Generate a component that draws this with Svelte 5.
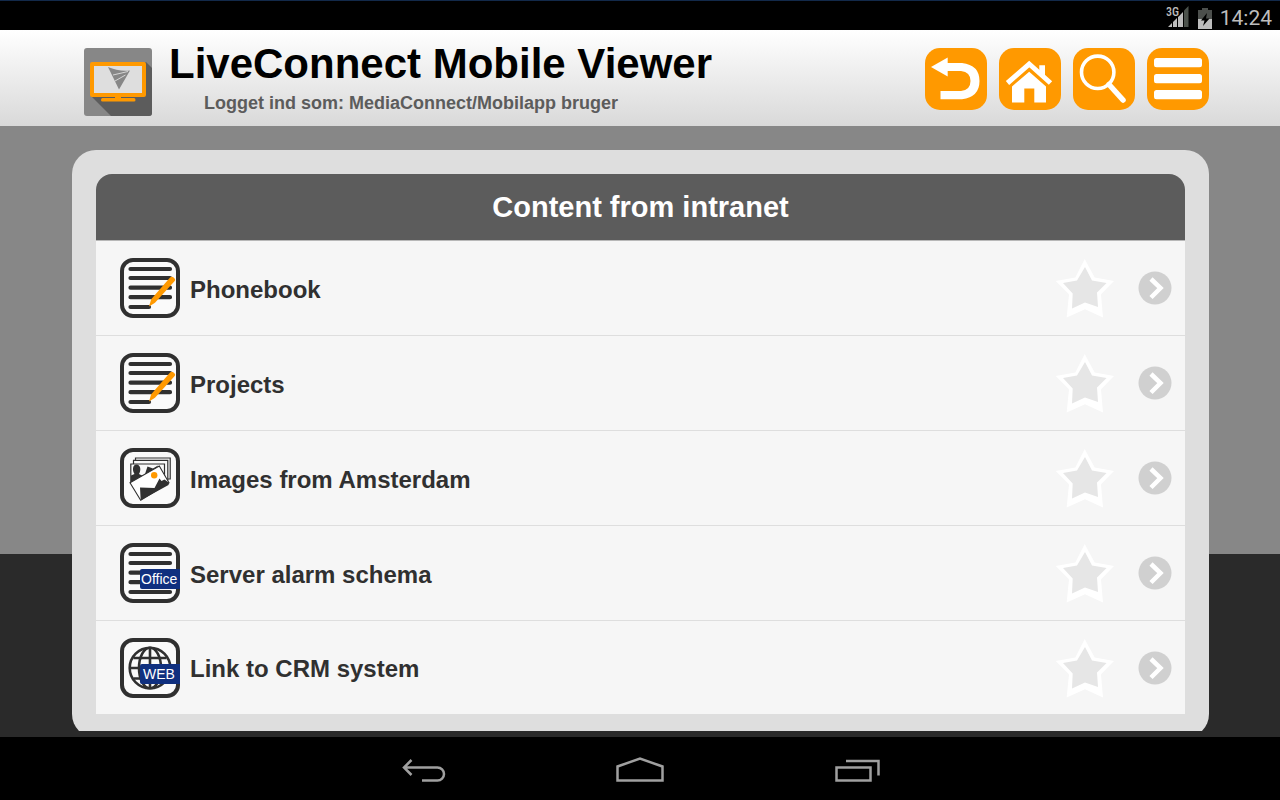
<script>
  const items = [
    { title: 'Phonebook', icon: 'edit' },
    { title: 'Projects', icon: 'edit' },
    { title: 'Images from Amsterdam', icon: 'images' },
    { title: 'Server alarm schema', icon: 'office' },
    { title: 'Link to CRM system', icon: 'web' }
  ];
</script>

{#snippet rowIcon(kind)}
  <svg class="row-icon" viewBox="0 0 60 60" aria-hidden="true">
    <rect x="2" y="2" width="56" height="56" rx="11" fill="#fafafa" stroke="#303030" stroke-width="4" />
    {#if kind === 'edit' || kind === 'office'}
      <g stroke="#303030" stroke-width="4.2" stroke-linecap="round">
        <path d="M10.5 11H50M10.5 20H50M10.5 29.7H50M10.5 39.2H50" />
        {#if kind === 'edit'}
          <path d="M10.5 49H29" />
        {:else}
          <path d="M10.5 49H50" />
        {/if}
      </g>
    {/if}
    {#if kind === 'edit'}
      <path d="M29 48.5L31.2 41.3L50.3 19.2Q52 18 53.6 19.5Q56 21.3 54.7 23L35 44.7Z" fill="#ff9900" />
    {/if}
    {#if kind === 'images'}
      <g stroke="#303030" stroke-width="1.2" fill="#fafafa">
        <path d="M15.500 10H50.200V31H15.500Z" />
        <path d="M13.500 12.300H47.800V32H13.500Z" />
        <path d="M10.800 16H44.500V34H10.800Z" />
      </g>
      <path d="M11 34.500V27.500L14.500 26C12 22.500 12.500 16.500 16.500 16.500C20.500 16.500 21.500 22 19 26L23 28V32Z" fill="#303030" />
      <path d="M25 26L27.500 18.500L33 20.500L38 17.500L35 25Z" fill="#303030" />
      <path d="M10 34.700L39.300 17.900L49 34.700L20.700 52.300Z" fill="#fff" stroke="#303030" stroke-width="1.1" />
      <path d="M20.700 52.300L20 39.500L34.500 40L39.500 30.500L41.500 33L44.500 31.500L49 34.700L48.500 37Z" fill="#303030" />
      <circle cx="34.200" cy="27.200" r="3.200" fill="#ff9900" />
    {/if}
    {#if kind === 'web'}
      <g fill="none" stroke="#303030" stroke-width="2.6">
        <circle cx="30" cy="30" r="20.3" />
        <ellipse cx="30" cy="30" rx="11" ry="20.3" />
        <path d="M30 10V50M10 30H50M13.5 20H46.5M13.5 40.5H46.5" />
      </g>
    {/if}
    {#if kind === 'office' || kind === 'web'}
      <path d="M22 26H60V46H22Q20 46 20 44V28Q20 26 22 26Z" fill="#10307f" />
      <text x={kind === 'office' ? 21 : 23} y="41" class="tag">{kind === 'office' ? 'Office' : 'WEB'}</text>
    {/if}
  </svg>
{/snippet}

<div class="screen">
  <div class="status">
    <svg class="signal" viewBox="0 0 24 24" aria-label="3G signal">
      <path d="M22.5 0V21H18V4.5Z" fill="#4c524c" />
      <path d="M2 21L6 17V21ZM7 21V16L11 12V21ZM12 21V11L17 6V21Z" fill="#bdbdbd" />
      <text x="0" y="10" class="net">3G</text>
    </svg>
    <svg class="battery" viewBox="0 0 14 21" aria-label="Battery charging">
      <path d="M4 0H10V2H14V12H0V2H4Z" fill="#4c4f4c" />
      <path d="M0 11H14V21H0Z" fill="#bdbdbd" />
      <path d="M9 5L3 12.5H6.5L5 18L11.5 10.5H8Z" fill="#000" />
    </svg>
    <span class="clock">14:24</span>
  </div>

  <header>
    <svg class="logo" viewBox="0 0 68 68" aria-hidden="true">
      <rect width="68" height="68" rx="3" fill="#878787" />
      <path d="M62 14L68 20V65Q68 68 65 68H27L7 48Z" fill="#5c5c5c" />
      <rect x="8" y="16" width="52" height="31" fill="#dedede" stroke="#ff9900" stroke-width="4" stroke-linejoin="round" />
      <path d="M31 48H37V50H50Q51.5 50 51.5 52Q51.5 53.5 50 53.5H18.5Q17 53.5 17 52Q17 50 18.5 50H31Z" fill="#ff9900" />
      <path d="M24 19Q34 23.5 46 22.5L35 41.5Z" fill="#878787" />
      <path d="M29 27L44 23.500M31 33L41.500 27" stroke="#dedede" stroke-width="0.9" />
    </svg>
    <div class="heading">
      <h1>LiveConnect Mobile Viewer</h1>
      <p>Logget ind som: MediaConnect/Mobilapp bruger</p>
    </div>
    <nav class="tools" aria-label="Tools">
      <button aria-label="Back">
        <svg viewBox="0 0 62 62">
          <path d="M6 19L22.700 9.500V28.500Z" fill="#fff" />
          <path d="M22 15H37Q54.500 17 54.500 33Q54.500 49 37 51.200H15.500V43H36Q45.500 42 45.500 33Q45.500 24 36 23H22Z" fill="#fff" />
        </svg>
      </button>
      <button aria-label="Home">
        <svg viewBox="0 0 62 62">
          <path d="M8.500 35L30.200 16L51.500 35" fill="none" stroke="#fff" stroke-width="5" />
          <path d="M40.300 17.200H46V30L40.300 25Z" fill="#fff" />
          <path d="M30.200 23.700L47 38.500V54.500H35.300V40.500H25.300V54.500H13V38.500Z" fill="#fff" />
        </svg>
      </button>
      <button aria-label="Search">
        <svg viewBox="0 0 62 62" fill="none" stroke="#fff">
          <circle cx="24.700" cy="24.300" r="16.200" stroke-width="3.600" />
          <path d="M36 36.500L50 52" stroke-width="5.500" stroke-linecap="round" />
        </svg>
      </button>
      <button aria-label="Menu">
        <svg viewBox="0 0 62 62" fill="#fff">
          <rect x="7" y="10" width="48" height="9.300" rx="2.500" />
          <rect x="7" y="26" width="48" height="9.300" rx="2.500" />
          <rect x="7" y="42" width="48" height="9.300" rx="2.500" />
        </svg>
      </button>
    </nav>
  </header>

  <main>
    <div class="viewport">
      <section class="card">
        <h2>Content from intranet</h2>
        <ul>
          {#each items as item}
            <li>
              <a class="entry" href="#content">
                {@render rowIcon(item.icon)}
                <span>{item.title}</span>
              </a>
              <button class="star" aria-label="Mark {item.title} as favourite">
                <svg viewBox="0 0 60 60">
                  <path d="M29.700 1L39.700 19.500L59 23L46 36.500L48 59.500L30 51.300L11.700 59.500L14 36.500L.7 23L20.300 19.500Z" fill="#fff" />
                  <path d="M30 9L37 22.500L51.500 25L42 34.500L43 49L30 44.500L17 50.500L17.700 35.500L8 25L22 22.500Z" fill="#e6e6e6" />
                </svg>
              </button>
              <a class="open" href="#content" aria-label="Open {item.title}">
                <svg viewBox="0 0 34 34">
                  <circle cx="17" cy="17" r="16.500" fill="#d0d0d0" />
                  <path d="M13 8L22.500 17L13 26.500" fill="none" stroke="#fff" stroke-width="4.500" />
                </svg>
              </a>
            </li>
          {/each}
        </ul>
      </section>
    </div>
  </main>

  <nav class="system" aria-label="System">
    <button aria-label="System back">
      <svg viewBox="0 0 48 30">
        <path d="M3.500 11.500H37.500A6.500 6.500 0 0 1 37.500 24.500H22M11.500 4L4 11.500L11.500 19" />
      </svg>
    </button>
    <button aria-label="System home">
      <svg viewBox="0 0 48 30">
        <path d="M1.500 24.500V10.500L24 2.500L46.500 10.500V24.500Z" />
      </svg>
    </button>
    <button aria-label="Recent apps">
      <svg viewBox="0 0 48 30">
        <path d="M4.500 11.500H38.500V24.500H4.500ZM14 5H46.500V19.500" />
      </svg>
    </button>
  </nav>
</div>

<style>
  :global(body) {
    margin: 0;
    background: #000;
  }

  .screen {
    display: flex;
    flex-direction: column;
    height: 100vh;
    font-family: "Liberation Sans", Arial, sans-serif;
  }

  svg {
    display: block;
  }

  button {
    padding: 0;
    border: 0;
    background: none;
    cursor: pointer;
  }

  .status {
    box-sizing: border-box;
    display: flex;
    flex: none;
    align-items: center;
    justify-content: flex-end;
    gap: 8px;
    height: 30px;
    padding: 5px 8px 0 0;
    border-top: 1px solid #12294a;
    background: #000;
    color: #bdbdbd;
  }

  .signal {
    width: 24px;
    height: 24px;
  }

  .battery {
    width: 14px;
    height: 21px;
  }

  .net {
    font: 500 12px "Roboto Condensed", Roboto, sans-serif;
    fill: #bdbdbd;
    stroke: #000;
    stroke-width: 2px;
    paint-order: stroke;
  }

  .clock {
    font: 400 21px/24px Roboto, sans-serif;
  }

  header {
    box-sizing: border-box;
    display: flex;
    flex: none;
    align-items: flex-start;
    height: 96px;
    padding: 18px 71px 0 84px;
    background: linear-gradient(#fff, #d9d9d9);
  }

  .logo {
    flex: none;
    width: 68px;
    height: 68px;
  }

  .heading {
    flex: 1;
    padding-left: 17px;
  }

  h1 {
    margin: -8px 0 0;
    font-size: 42px;
    line-height: 48px;
    color: #000;
  }

  p {
    margin: 4px 0 0;
    padding-left: 35px;
    font-size: 18px;
    font-weight: bold;
    line-height: 22px;
    color: #5c5c5c;
  }

  .tools {
    display: flex;
    gap: 12px;
  }

  .tools button {
    width: 62px;
    height: 62px;
    border-radius: 15px;
    background: #ff9900;
  }

  main {
    display: flex;
    flex: 1;
    min-height: 0;
    padding-bottom: 6px;
    background: linear-gradient(#878787 70%, #2a2a2a 70%);
  }

  .viewport {
    flex: 1;
    padding: 24px 71px 0 72px;
    overflow: hidden;
  }

  .card {
    padding: 24px;
    border-radius: 24px;
    background: #dedede;
  }

  h2 {
    margin: 0;
    border-radius: 16px 16px 0 0;
    background: #5c5c5c;
    font-size: 29px;
    line-height: 66px;
    text-align: center;
    color: #fff;
  }

  ul {
    margin: 0;
    padding: 0;
    list-style: none;
    background: #f6f6f6;
  }

  li {
    display: flex;
    align-items: center;
    height: 94px;
    padding: 0 13px 0 24px;
    border-top: 1px solid #dedede;
  }

  li:first-child {
    border-top-color: #b8b8b8;
  }

  li:last-child {
    height: 93px;
  }

  .entry {
    display: flex;
    flex: 1;
    align-items: center;
    gap: 10px;
    font-size: 24px;
    font-weight: bold;
    line-height: 28px;
    color: #303030;
    text-decoration: none;
  }

  .entry span {
    padding-top: 3px;
  }

  .row-icon {
    width: 60px;
    height: 60px;
  }

  .tag {
    font: 14px "Liberation Sans", Arial, sans-serif;
    fill: #fff;
  }

  .star {
    width: 60px;
    height: 60px;
    margin-right: 23px;
  }

  .open {
    width: 34px;
    height: 34px;
  }

  .system {
    box-sizing: border-box;
    display: flex;
    flex: none;
    align-items: center;
    justify-content: center;
    gap: 168px;
    height: 63px;
    padding-top: 4px;
    background: #000;
  }

  .system svg {
    width: 48px;
    height: 30px;
    fill: none;
    stroke: #a0a0a0;
    stroke-width: 2.5;
  }
</style>
